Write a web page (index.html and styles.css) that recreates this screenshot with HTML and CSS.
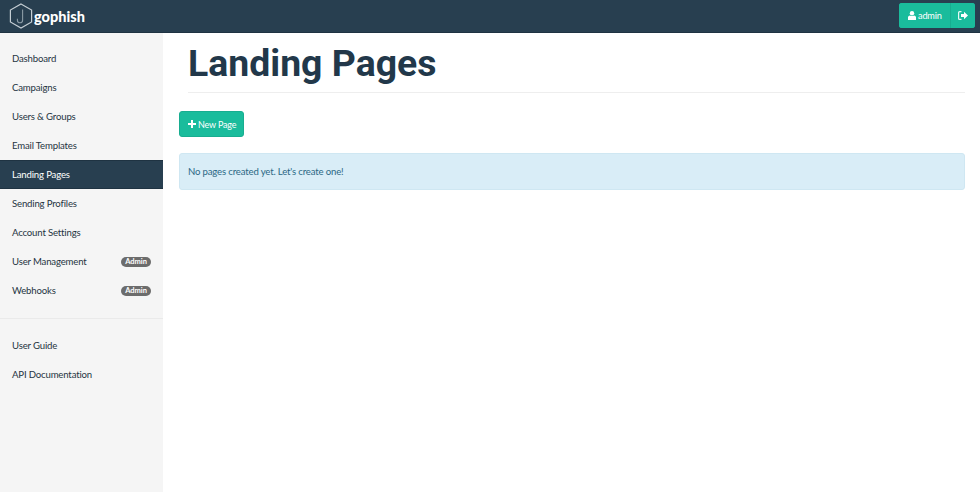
FILE: index.html
```html
<!DOCTYPE html>
<html lang="en">
<head>
<meta charset="utf-8">
<title>Gophish - Landing Pages</title>
<link rel="stylesheet" href="styles.css">
</head>
<body>
<header class="topbar">
  <a class="brand" href="#">
    <svg class="brand-logo" width="24" height="26" viewBox="0 0 24 26" fill="none">
      <path d="M12 1 22.6 7v12L12 25 1.4 19V7z" stroke="#c5ced4" stroke-width="1.2"/>
      <path d="M13.6 6.5v10.700a2.600 2.600 0 0 1-5.200 0v-1.400" stroke="#8c9ca6" stroke-width="1.1"/>
    </svg>
    <span class="brand-name">gophish</span>
  </a>
  <div class="user-group">
    <a class="user-btn user-name" href="#">
      <svg class="icon" width="8" height="9" viewBox="0 0 8 9"><circle cx="4" cy="2.300" r="2.200" fill="#fff"/><path d="M0 9V6.600C0 5.200 1 4.400 2 4.400c.6.400 1.200.6 2 .6s1.400-.2 2-.6c1 0 2 .8 2 2.200V9z" fill="#fff"/></svg>
      admin
    </a>
    <a class="user-btn user-out" href="#">
      <svg class="icon" width="10" height="9" viewBox="0 0 10 9"><path d="M3.500 0H1.600A1.600 1.600 0 0 0 0 1.600v5.800A1.600 1.600 0 0 0 1.600 9h1.900V7.800H1.800a.6.6 0 0 1-.6-.6V1.800a.6.6 0 0 1 .6-.6h1.700z" fill="#e6f7f3"/><path d="M3 3h3V.8L10 4.500 6 8.200V6H3z" fill="#fff"/></svg>
    </a>
  </div>
</header>
<div class="layout">
  <nav class="sidebar">
    <ul class="nav-list">
      <li><a class="nav-item" href="#">Dashboard</a></li>
      <li><a class="nav-item" href="#">Campaigns</a></li>
      <li><a class="nav-item" href="#">Users &amp; Groups</a></li>
      <li><a class="nav-item" href="#">Email Templates</a></li>
      <li><a class="nav-item active" href="#">Landing Pages</a></li>
      <li><a class="nav-item" href="#">Sending Profiles</a></li>
      <li><a class="nav-item" href="#">Account Settings</a></li>
      <li><a class="nav-item" href="#">User Management <span class="badge">Admin</span></a></li>
      <li><a class="nav-item" href="#">Webhooks <span class="badge">Admin</span></a></li>
    </ul>
    <hr class="nav-rule">
    <ul class="nav-list">
      <li><a class="nav-item" href="#">User Guide</a></li>
      <li><a class="nav-item" href="#">API Documentation</a></li>
    </ul>
  </nav>
  <main class="content">
    <h1 class="page-title">Landing Pages</h1>
    <a class="new-btn" href="#">
      <svg class="icon" width="8" height="8" viewBox="0 0 8 8"><path d="M3 0h2v3h3v2H5v3H3V5H0V3h3z" fill="#fff"/></svg>
      New Page
    </a>
    <div class="alert">No pages created yet. Let's create one!</div>
  </main>
</div>
</body>
</html>
```
FILE: styles.css
```css
* { box-sizing: border-box; }
html, body { height: 100%; }
body {
  margin: 0;
  background: #fff;
  color: #253442;
  font-family: Lato, "Noto Sans", sans-serif;
  font-size: 9.6px;
  letter-spacing: -0.17px;
  overflow: hidden;
}
a { text-decoration: none; color: inherit; }
.topbar {
  height: 33px;
  background: #283f50;
  border-bottom: 1px solid #1f3342;
  display: flex;
  align-items: center;
  justify-content: space-between;
  padding: 0 5px 0 9px;
}
.brand { display: flex; align-items: center; gap: 1px; }
.brand-logo { display: block; }
.brand-name {
  color: #fff;
  font-size: 14.5px;
  font-weight: 900;
  letter-spacing: 0;
}
.user-group {
  display: flex;
  height: 25px;
  margin-top: -2px;
  border-radius: 3px;
  overflow: hidden;
  background: #1abc9c;
}
.user-btn {
  display: flex;
  align-items: center;
  color: #fff;
  background: #1abc9c;
  font-size: 9.2px;
}
.user-name { width: 52px; padding-left: 9px; gap: 2px; border-right: 1px solid #18ad90; }
.user-out { width: 24px; justify-content: center; }
.layout { display: flex; height: 459px; }
.sidebar {
  width: 163px;
  flex: none;
  background: #f5f5f5;
  padding-top: 11px;
}
.nav-list { list-style: none; margin: 0; padding: 0; }
.nav-item {
  display: flex;
  align-items: center;
  justify-content: space-between;
  height: 29px;
  padding: 0 12px 1px;
  color: #253442;
}
.nav-item.active {
  background: #283f50;
  color: #fff;
  border-top: 1px solid #1f3342;
  border-bottom: 1px solid #1f3342;
}
.badge {
  background: #6c6c6c;
  color: #fff;
  font-size: 7.5px;
  font-weight: 700;
  letter-spacing: 0;
  border-radius: 5px;
  padding: 0 4px;
  height: 10px;
  line-height: 10px;
  margin-top: 2px;
}
.nav-rule { border: 0; border-top: 1px solid #eaeaea; margin: 13px 0 12px; }
.content { flex: 1; padding: 0 15px 0 16px; }
.page-title {
  font-family: Roboto, sans-serif;
  font-size: 37.400px;
  font-weight: 700;
  line-height: 42px;
  letter-spacing: 0;
  color: #22384a;
  margin: 9px 0 0 9px;
  padding-bottom: 8px;
  border-bottom: 1px solid #eeeeee;
}
.new-btn {
  display: flex;
  align-items: center;
  gap: 2px;
  width: 64.5px;
  height: 26px;
  margin-top: 18px;
  padding-left: 8px;
  background: #1abc9c;
  border: 1px solid #18ad90;
  border-radius: 3px;
  color: #fff;
  font-size: 9px;
}
.alert {
  height: 37px;
  margin-top: 16px;
  padding: 0 8px 1px;
  display: flex;
  align-items: center;
  background: #d9edf7;
  border: 1px solid #cfe7f2;
  border-radius: 3px;
  color: #2b6885;
}
```
